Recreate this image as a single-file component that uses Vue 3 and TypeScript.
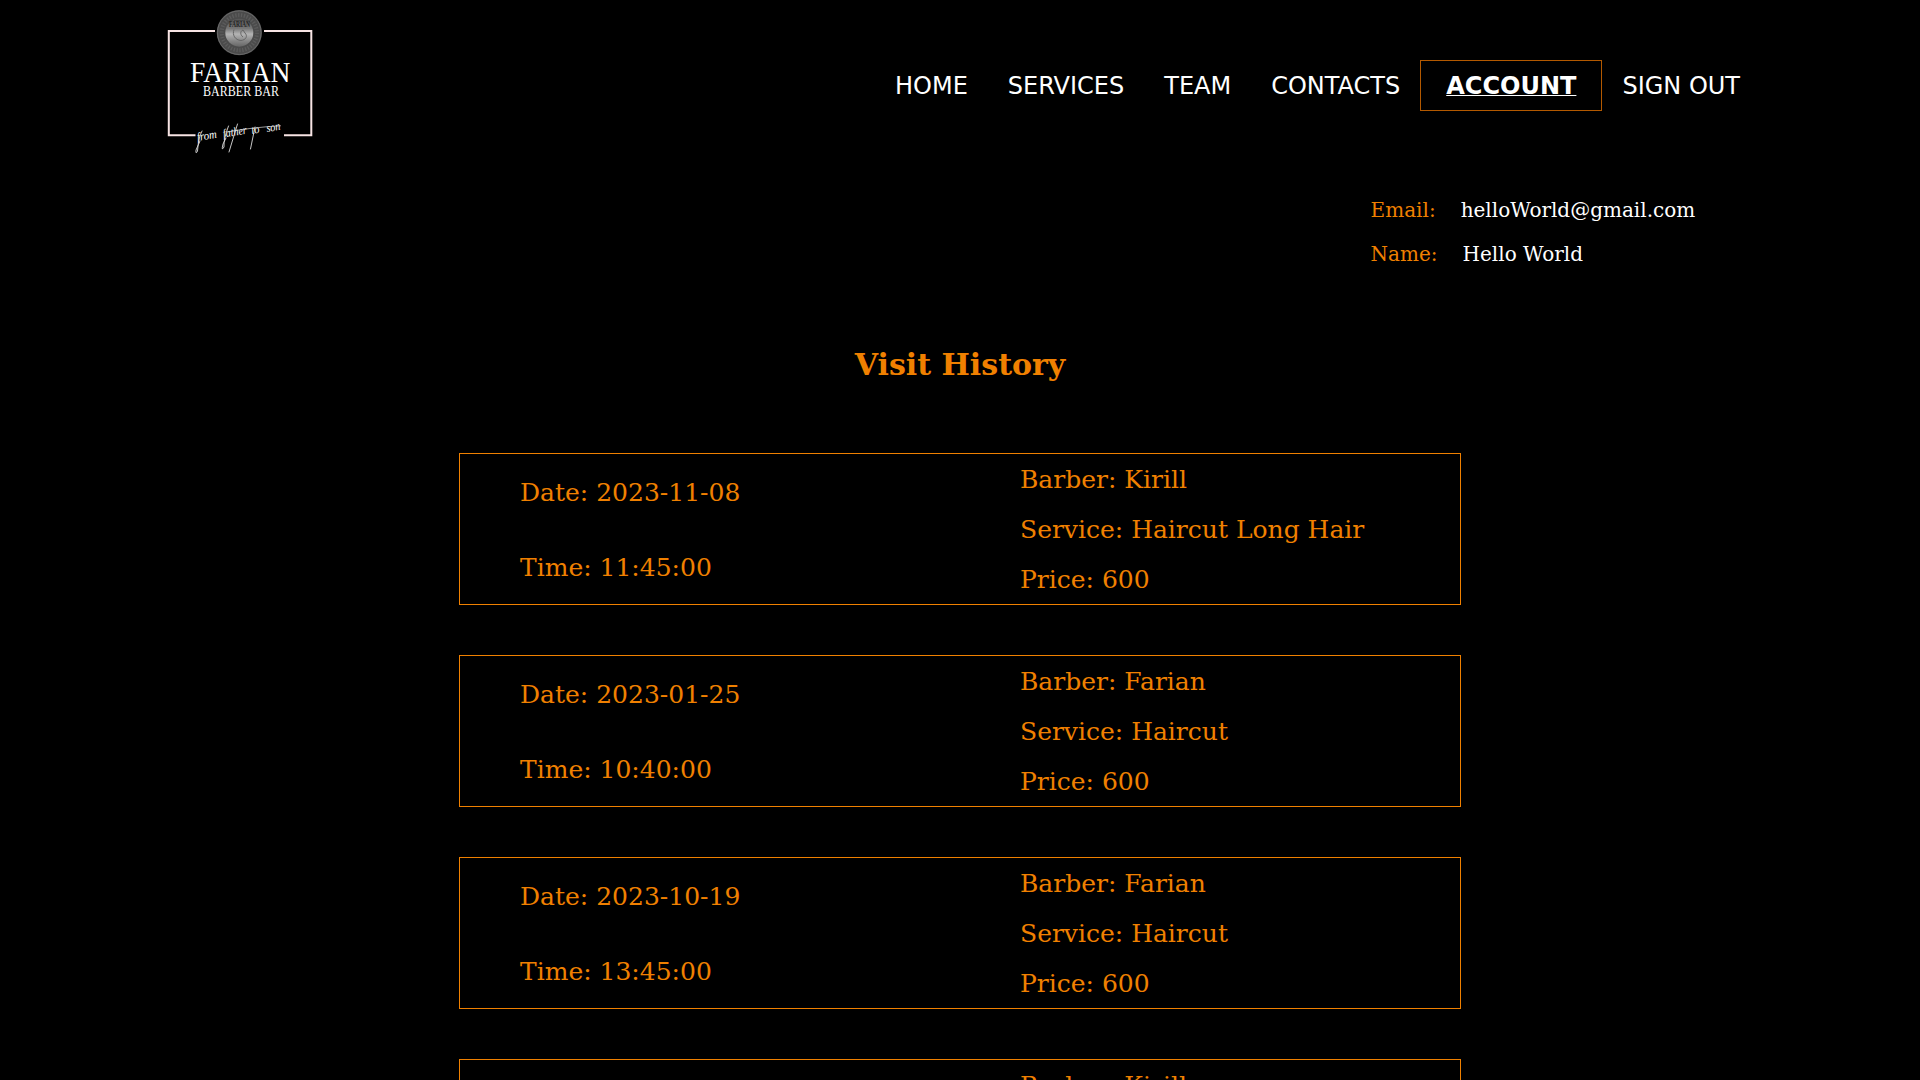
<script setup lang="ts">
interface NavItem {
  label: string
  active?: boolean
}

interface Visit {
  date: string
  time: string
  barber: string
  service: string
  price: number
}

const navItems: NavItem[] = [
  { label: 'HOME' },
  { label: 'SERVICES' },
  { label: 'TEAM' },
  { label: 'CONTACTS' },
  { label: 'ACCOUNT', active: true },
  { label: 'SIGN OUT' },
]

const user = { email: 'helloWorld@gmail.com', name: 'Hello World' }

const visits: Visit[] = [
  { date: '2023-11-08', time: '11:45:00', barber: 'Kirill', service: 'Haircut Long Hair', price: 600 },
  { date: '2023-01-25', time: '10:40:00', barber: 'Farian', service: 'Haircut', price: 600 },
  { date: '2023-10-19', time: '13:45:00', barber: 'Farian', service: 'Haircut', price: 600 },
  { date: '2023-11-08', time: '11:45:00', barber: 'Kirill', service: 'Haircut Long Hair', price: 600 },
]
</script>

<template>
  <div class="page">
    <header class="header">
      <svg class="logo" viewBox="150 0 180 170" width="180" height="170">
        <defs>
          <linearGradient id="coin" x1="0" y1="0" x2="0" y2="1">
            <stop offset="0" stop-color="#555" />
            <stop offset="0.35" stop-color="#777" />
            <stop offset="0.55" stop-color="#b4b4b4" />
            <stop offset="0.8" stop-color="#858585" />
            <stop offset="1" stop-color="#666" />
          </linearGradient>
        </defs>
        <g fill="none" stroke="#f7e4e4" stroke-width="2">
          <path d="M215 31H168.8V135.3H195.5" />
          <path d="M264 31H311.3V135.3H284" />
        </g>
        <circle cx="239.3" cy="32.7" r="22.6" fill="#4b4b4b" />
        <circle cx="239.3" cy="32.7" r="21.8" fill="none" stroke="#6a6a6a" stroke-width="1" />
        <circle cx="239.3" cy="32.7" r="17.6" fill="none" stroke="#5c5c5c" stroke-width="4" stroke-dasharray="1.3 1.6" />
        <circle cx="239.3" cy="32.7" r="14" fill="url(#coin)" />
        <path d="M234 20.6H245" stroke="#3d3d3d" stroke-width="0.8" />
        <text class="serif" x="229" y="26.8" font-size="7.5" font-weight="bold" fill="#222" textLength="21" lengthAdjust="spacingAndGlyphs">FARIAN</text>
        <path d="M234 29.5C232 35 235 40 241 40.5C246 40 248 36 245 33L243 30C240 31 240 35 243 37" fill="none" stroke="#666" stroke-width="1" />
        <text class="serif" x="190" y="81.7" font-size="29.5" fill="#fff" textLength="100.500" lengthAdjust="spacingAndGlyphs">FARIAN</text>
        <text class="serif" x="203" y="96" font-size="13.8" fill="#fff" textLength="76" lengthAdjust="spacingAndGlyphs">BARBER BAR</text>
        <g class="script" fill="#fff">
          <text transform="translate(197.5 141) rotate(-9)" textLength="20" lengthAdjust="spacingAndGlyphs">from</text>
          <text transform="translate(223.5 137.5) rotate(-9)" textLength="24" lengthAdjust="spacingAndGlyphs">father</text>
          <text transform="translate(252 134) rotate(-9)" textLength="8" lengthAdjust="spacingAndGlyphs">to</text>
          <text transform="translate(267 132) rotate(-9)" textLength="14" lengthAdjust="spacingAndGlyphs">son</text>
        </g>
        <g fill="none" stroke="#ddd" stroke-width="0.9" stroke-linecap="round">
          <path d="M202 131Q198.500 137 197.500 151Q195.500 155 196 150L200 141" />
          <path d="M228.500 126Q223.500 139 224 147Q221 152 223 144L226 138" />
          <path d="M237.500 124L229 152M255 127L250.500 149" />
          <path d="M228 132Q250 127.500 280.500 125.800" stroke-width="0.700" />
        </g>
      </svg>

      <nav class="nav">
        <a v-for="item in navItems" :key="item.label" class="nav-item" :class="{ active: item.active }">{{ item.label }}</a>
      </nav>
    </header>

    <section class="user">
      <div class="user-row"><span class="label">Email:</span><span>{{ user.email }}</span></div>
      <div class="user-row"><span class="label">Name:</span><span>{{ user.name }}</span></div>
    </section>

    <h1 class="title">Visit History</h1>

    <main class="visits">
      <article v-for="(visit, index) in visits" :key="index" class="visit">
        <div class="column when">
          <div>Date: {{ visit.date }}</div>
          <div>Time: {{ visit.time }}</div>
        </div>
        <div class="column">
          <div>Barber: {{ visit.barber }}</div>
          <div>Service: {{ visit.service }}</div>
          <div>Price: {{ visit.price }}</div>
        </div>
      </article>
    </main>
  </div>
</template>

<style>
html,
body {
  background: #000;
}

body {
  overflow: hidden;
}
</style>

<style scoped>
.page {
  height: 1080px;
  overflow: hidden;
  font-family: 'DejaVu Serif', serif;
  color: #fff;
}

.header {
  display: flex;
  align-items: center;
  justify-content: space-between;
  height: 170px;
  padding: 0 160px 0 150px;
}

.logo {
  display: block;
}

.serif {
  font-family: 'Liberation Serif', serif;
}

.script {
  font-family: 'Liberation Serif', serif;
  font-style: italic;
  font-size: 12px;
}

.nav {
  display: flex;
  align-items: center;
  font-family: 'DejaVu Sans', sans-serif;
  font-size: 24px;
  line-height: 29px;
}

.nav-item {
  padding: 11px 20px 9px;
}

.nav-item.active {
  padding: 11px 25px 9px;
  border: 1px solid #b35900;
  font-weight: bold;
  text-decoration: underline 1px;
  text-underline-offset: 1px;
  text-decoration-skip-ink: none;
}

.user {
  display: flex;
  flex-direction: column;
  gap: 20px;
  padding: 28px 0 0 1370.6px;
  font-size: 20px;
  line-height: 24px;
}

.user-row {
  display: flex;
  gap: 25px;
}

.label {
  color: #f08000;
}

.title {
  margin: 81px 0 0;
  font-size: 30px;
  line-height: 36px;
  font-weight: bold;
  text-align: center;
  color: #f08000;
}

.visits {
  display: flex;
  flex-direction: column;
  align-items: center;
  gap: 50px;
  margin-top: 70px;
}

.visit {
  display: flex;
  flex: none;
  width: 1000px;
  height: 150px;
  border: 1px solid #f08000;
  font-size: 25px;
  line-height: 50px;
  color: #f08000;
}

.column {
  box-sizing: border-box;
  width: 500px;
  padding: 1px 0 0 60px;
}

.when {
  line-height: 75px;
}
</style>
